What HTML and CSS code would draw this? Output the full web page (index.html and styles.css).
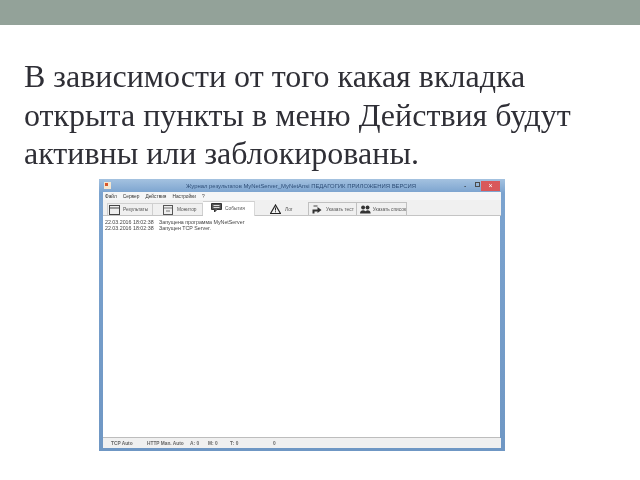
FILE: index.html
```html
<!DOCTYPE html>
<html lang="ru">
<head>
  <meta charset="UTF-8">
  <meta name="viewport" content="width=device-width, initial-scale=1.0">
  <title>Журнал результатов</title>
  <link rel="stylesheet" href="styles.css">
</head>
<body>
  <div class="top-band"></div>
  <p class="slide-text">В зависимости от того какая вкладка открыта пункты в меню Действия будут активны или заблокированы.</p>

  <div class="window">
    <div class="title-bar">
      <svg class="app-icon" width="7" height="7" viewBox="0 0 7 7"><rect width="7" height="7" fill="#f4e6d0"/><rect x="1" y="1" width="3" height="3" fill="#d8562a"/></svg>
      <span class="title-text">Журнал результатов MyNetServer_MyNetAnsi ПЕДАГОГИК ПРИЛОЖЕНИЯ ВЕРСИЯ</span>
      <div class="win-buttons">
        <span class="win-min">-</span>
        <span class="win-max"></span>
        <span class="win-close">×</span>
      </div>
    </div>

    <div class="menu-bar">
      <span>Файл</span><span>Сервер</span><span>Действия</span><span>Настройки</span><span>?</span>
    </div>

    <div class="tab-bar">
      <div class="tab tab-results">
        <svg width="11" height="10" viewBox="0 0 11 10"><rect x=".5" y=".5" width="10" height="9" fill="#eee" stroke="#444"/><path d="M1 3h9" stroke="#444"/></svg>
        <span>Результаты</span>
      </div>
      <div class="tab tab-monitor">
        <svg width="10" height="10" viewBox="0 0 10 10"><rect x=".5" y=".5" width="9" height="9" fill="#eee" stroke="#555"/><path d="M1 3h8M3 6h4" stroke="#777"/></svg>
        <span>Монитор</span>
      </div>
      <div class="tab tab-events active">
        <svg width="11" height="10" viewBox="0 0 11 10"><path d="M.5.5h10v6H6L3.500 9V6.500h-3z" fill="#555" stroke="#333"/><path d="M2.500 2.500h6M2.500 4.500h6" stroke="#ddd"/></svg>
        <span>События</span>
      </div>
      <div class="tab tab-log">
        <svg width="11" height="10" viewBox="0 0 11 10"><path d="M5.500 1L10.500 9.500H.5z" fill="#f2f2f2" stroke="#222" stroke-width="1.200"/><path d="M5.500 3.500v3M5.500 7.300v1" stroke="#222"/></svg>
        <span>Лог</span>
      </div>
      <div class="tab-gap"></div>
      <div class="tab tab-action tab-test">
        <svg width="10" height="10" viewBox="0 0 10 10"><path d="M.5 9.500V5.500h5V3l4 3-4 3V7.500H2.500v2z" fill="#333"/><path d="M1.500 1h4v2h-4z" fill="#999"/></svg>
        <span>Указать тест</span>
      </div>
      <div class="tab tab-action tab-list">
        <svg width="12" height="9" viewBox="0 0 12 9"><circle cx="3.500" cy="2.300" r="2.200" fill="#333"/><circle cx="8.500" cy="2.300" r="2.200" fill="#333"/><path d="M0 9c0-5 7-5 7 0zM5.500 9c0-5 6.500-5 6.500 0z" fill="#333"/></svg>
        <span>Указать список</span>
      </div>
    </div>

    <div class="log-area">
      <div class="log-row"><span class="log-time">22.03.2016 18:02:38</span><span>Запущена программа MyNetServer</span></div>
      <div class="log-row"><span class="log-time">22.03.2016 18:02:38</span><span>Запущен TCP Server.</span></div>
    </div>

    <div class="status-bar">
      <span class="st-tcp">TCP Auto</span>
      <span class="st-http">HTTP Man. Auto</span>
      <span class="st-a">А: 0</span>
      <span class="st-b">М: 0</span>
      <span class="st-c">Т: 0</span>
      <span class="st-d">0</span>
    </div>
  </div>
</body>
</html>
```

FILE: styles.css
```css
body {
  margin: 0;
  height: 480px;
  overflow: hidden;
  background-color: #ffffff;
  font-family: "Liberation Serif", serif;
}

.top-band {
  height: 25px;
  background-color: #93a299;
}

.slide-text {
  width: 560px;
  height: 122px;
  margin: 0;
  padding: 32px 0 0 24px;
  font-size: 32px;
  line-height: 38.500px;
  color: #2f2f36;
  filter: blur(0.3px);
}

/* program window */
.window {
  width: 406px;
  height: 272px;
  margin-left: 99px;
  box-sizing: border-box;
  padding: 0 5px 3px 4px;
  display: flex;
  flex-direction: column;
  background: linear-gradient(#a4c2e0, #7ba3cf 14px, #6f97c4);
  font-family: "Liberation Sans", sans-serif;
  font-size: 4.800px;
  color: #555555;
  filter: blur(0.5px);
}

.title-bar {
  height: 13px;
  display: flex;
  align-items: center;
  flex-shrink: 0;
}

.app-icon {
  margin-left: 1px;
}

.title-text {
  flex: 1;
  text-align: center;
  padding-left: 31px;
  font-size: 5.900px;
  color: #2f4f78;
  white-space: nowrap;
}

.win-buttons {
  display: flex;
  align-items: center;
  width: 40px;
  flex-shrink: 0;
}

.win-min {
  width: 12px;
  text-align: center;
  color: #222;
  font-size: 7px;
}

.win-max {
  width: 4px;
  height: 3px;
  border: 1px solid #4a4a4a;
  margin: 0 1px 2px 4px;
}

.win-close {
  flex-shrink: 0;
  width: 19px;
  height: 10px;
  line-height: 9px;
  text-align: center;
  background-color: #d9585a;
  color: #fff;
  font-size: 7px;
}

.menu-bar {
  height: 8px;
  background-color: #f5f6f7;
  margin: 0 -1px 0 0;
  display: flex;
  align-items: center;
  gap: 6px;
  padding-left: 2px;
  color: #333;
  flex-shrink: 0;
}

.tab-bar {
  height: 16px;
  flex-shrink: 0;
  display: flex;
  align-items: flex-end;
  background-color: #f0f0f0;
  padding-left: 4px;
  margin-right: -1px;
  border-bottom: 1px solid #c4c4c4;
  box-sizing: border-box;
}

.tab {
  height: 12px;
  box-sizing: border-box;
  display: flex;
  align-items: center;
  gap: 3px;
  border: 1px solid #cfcfcf;
  border-bottom: none;
  border-left: none;
  white-space: nowrap;
}

.tab-results { width: 46px; padding-left: 1px; border-left: 1px solid #cfcfcf; }
.tab-monitor { width: 50px; padding-left: 10px; gap: 4px; }
.tab-events { width: 52px; padding-left: 8px; }
.tab-log { width: 50px; padding-left: 15px; gap: 4px; border: none; }

.tab.active {
  height: 15px;
  margin-bottom: -1px;
  background-color: #ffffff;
  border-right: 1px solid #d8d8d8;
  padding-bottom: 2px;
}

.tab-gap { width: 3px; }

.tab-action {
  height: 13px;
  border: 1px solid #c0c0c0;
  border-bottom: none;
}

.tab-test { width: 49px; padding-left: 3px; gap: 4px; }
.tab-list { width: 50px; padding-left: 3px; gap: 2px; border-left: none; }

.log-area {
  flex: 1;
  background-color: #ffffff;
  padding: 3px 0 0 2px;
  border-bottom: 1px solid #bdbdbd;
}

.log-row {
  display: flex;
  height: 6px;
  line-height: 6px;
  font-size: 5.300px;
  white-space: nowrap;
  color: #444;
}

.log-time {
  width: 54px;
}

.status-bar {
  height: 10px;
  flex-shrink: 0;
  margin-right: -1px;
  display: flex;
  align-items: center;
  background-color: #f0f0f0;
  font-weight: bold;
  color: #666;
  white-space: nowrap;
}

.status-bar span {
  box-sizing: border-box;
}

.st-tcp { width: 44px; padding-left: 8px; }
.st-http { width: 43px; }
.st-a { width: 18px; }
.st-b { width: 22px; }
.st-c { width: 43px; }
```
